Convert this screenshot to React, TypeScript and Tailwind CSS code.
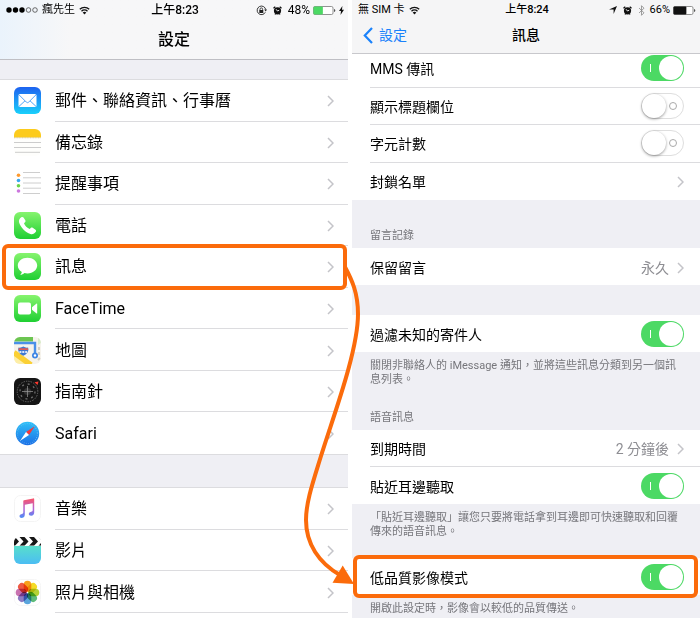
import { useState, useId, ReactNode } from "react";

interface AppItem {
  label: string;
  icon: ReactNode;
}

const GREEN = "#4cd964";

function MailIcon() {
  return (
    <svg viewBox="0 0 27 27" className="size-[27px] shrink-0">
      <defs>
        <linearGradient id="mail" x1="0" y1="0" x2="0" y2="1">
          <stop offset="0" stopColor="#1d62f0" />
          <stop offset="1" stopColor="#19d0fb" />
        </linearGradient>
      </defs>
      <rect width="27" height="27" rx="6" fill="url(#mail)" />
      <rect x="4.5" y="7" width="18" height="13" rx="1.5" fill="#fff" />
      <path d="M5 7.8l7.3 7.3a1.7 1.7 0 0 0 2.4 0l7.3-7.3M5 19.4l6-5.600M22 19.400l-6-5.600" fill="none" stroke="#3f9bf5" strokeWidth=".9" />
    </svg>
  );
}

function NotesIcon() {
  return (
    <svg viewBox="0 0 27 27" className="size-[27px] shrink-0">
      <path d="M0 8h27v13a6 6 0 0 1-6 6H6a6 6 0 0 1-6-6z" fill="#fefefc" />
      <path d="M0 8.5V6a6 6 0 0 1 6-6h15a6 6 0 0 1 6 6v2.5z" fill="#fccb1c" />
      <path d="M0 8.8h27" stroke="#c9b98a" strokeWidth=".7" strokeDasharray="1 .6" />
      <path d="M0 13.5h27M0 18.5h27M1 23.3h25" stroke="#c6c6c6" strokeWidth=".9" />
    </svg>
  );
}

function RemindersIcon() {
  return (
    <svg viewBox="0 0 27 27" className="size-[27px] shrink-0">
      <path d="M9 2.5h17M9 7.8h18M9 13h18M9 18.2h18M9 23.5h17" stroke="#c8c8c8" strokeWidth=".9" />
      <circle cx="4.5" cy="5.3" r="1.8" fill="#ff9a2e" />
      <circle cx="4.5" cy="10.5" r="1.8" fill="#38a8f0" />
      <circle cx="4.5" cy="15.8" r="1.8" fill="#6bd44a" />
      <circle cx="4.5" cy="21" r="1.8" fill="#cc78de" />
    </svg>
  );
}

function GreenTile({ id, children }: { id: string; children: ReactNode }) {
  return (
    <svg viewBox="0 0 27 27" className="size-[27px] shrink-0">
      <defs>
        <linearGradient id={id} x1="0" y1="0" x2="0" y2="1">
          <stop offset="0" stopColor="#86f46e" />
          <stop offset="1" stopColor="#1fcf32" />
        </linearGradient>
      </defs>
      <rect width="27" height="27" rx="6" fill={`url(#${id})`} />
      {children}
    </svg>
  );
}

function MapsIcon() {
  return (
    <svg viewBox="0 0 27 27" className="size-[27px] shrink-0">
      <defs>
        <clipPath id="maps"><rect width="27" height="27" rx="6" /></clipPath>
      </defs>
      <g clipPath="url(#maps)">
        <rect width="27" height="27" fill="#f6f3ec" />
        <path d="M0 0h19v4.500H0z" fill="#6cc551" />
        <path d="M24 0h3v6l-3 2z" fill="#d9ecca" />
        <path d="M0 14.500L17 27H0z" fill="#fdeea6" />
        <path d="M0 15.500L17 28" stroke="#fbd034" strokeWidth="5.500" />
        <path d="M25 10v3M25 15v3M24 23l2-2" stroke="#d2cdc0" strokeWidth="1.800" />
        <path d="M0 6h21v12" fill="none" stroke="#4a90e8" strokeWidth="2.400" />
        <circle cx="21" cy="18.500" r="3" fill="#3f86e4" />
        <circle cx="21" cy="18.500" r="1.200" fill="#fff" />
        <path d="M4.500 10.500q2.500.5 4.800-1 2.300 1.500 4.800 1 1.600 5.500-4.800 8.300-6.400-2.800-4.800-8.300z" fill="#3f78d0" />
        <path d="M4.600 12.200h9.500" stroke="#e25b55" strokeWidth="1.800" />
        <path d="M5.400 15h7.800" stroke="#dce8fa" strokeWidth="1.800" strokeDasharray="2 .9" />
      </g>
    </svg>
  );
}

function CompassIcon() {
  return (
    <svg viewBox="0 0 27 27" className="size-[27px] shrink-0">
      <rect width="27" height="27" rx="6" fill="#151515" />
      <circle cx="13.5" cy="13.5" r="10.3" fill="none" stroke="#8c8c8c" strokeWidth="1" strokeDasharray=".7 1.100" />
      <circle cx="13.5" cy="13.5" r="7.5" fill="none" stroke="#6d6d6d" strokeWidth="1.300" strokeDasharray="2 3.890" />
      <circle cx="13.5" cy="13.5" r="3.600" fill="#333" />
      <path d="M13.500 8v11M8 13.500h11" stroke="#999" strokeWidth=".7" />
      <path d="M20.500 4.200l4-.7-1 3.500z" fill="#ff3b30" />
    </svg>
  );
}

function SafariIcon() {
  return (
    <svg viewBox="0 0 27 27" className="size-[27px] shrink-0">
      <defs>
        <linearGradient id="safari" x1="0" y1="0" x2="0" y2="1">
          <stop offset="0" stopColor="#2fc0f7" />
          <stop offset="1" stopColor="#1b6fe6" />
        </linearGradient>
      </defs>
      <circle cx="13.500" cy="13.500" r="11.700" fill="url(#safari)" />
      <circle cx="13.500" cy="13.500" r="10" fill="none" stroke="#8fd0f8" strokeWidth="1.100" strokeDasharray=".4 1.700" />
      <path d="M20.800 6.200L12 12l3 3z" fill="#f2383b" />
      <path d="M6.200 20.800L12 12l3 3z" fill="#fff" />
    </svg>
  );
}

function MusicIcon() {
  return (
    <svg viewBox="0 0 27 27" className="size-[27px] shrink-0">
      <defs>
        <linearGradient id="music" x1="0" y1="0" x2="0" y2="1">
          <stop offset="0" stopColor="#fb5568" />
          <stop offset=".55" stopColor="#b263d8" />
          <stop offset="1" stopColor="#4a8df6" />
        </linearGradient>
      </defs>
      <rect x=".5" y=".5" width="26" height="26" rx="6" fill="#fff" stroke="#f4f4f4" />
      <path
        d="M9.300 6.300Q9.300 5.500 10 5.300L19.200 3.400Q20.200 3.200 20.200 4.200V17.500Q20.200 20.600 17.100 20.800 14.600 20.800 14.700 18.900 14.900 17.200 17.200 16.800 18.700 16.600 18.700 15.500V8.200L10.800 9.800V19.600Q10.800 22.700 7.800 22.900 5.300 22.900 5.400 20.900 5.600 19.300 7.800 18.900 9.300 18.700 9.300 17.500z"
        fill="url(#music)"
      />
    </svg>
  );
}

function VideosIcon() {
  return (
    <svg viewBox="0 0 27 27" className="size-[27px] shrink-0">
      <defs>
        <linearGradient id="videos" x1="0" y1="0" x2="0" y2="1">
          <stop offset="0" stopColor="#58dfcb" />
          <stop offset="1" stopColor="#4bbdf3" />
        </linearGradient>
        <clipPath id="slate"><path d="M0 8.700V5a5 5 0 0 1 5-5h17a5 5 0 0 1 5 5v3.700z" /></clipPath>
      </defs>
      <path d="M0 8.700h27V21a6 6 0 0 1-6 6H6a6 6 0 0 1-6-6z" fill="url(#videos)" />
      <g clipPath="url(#slate)">
        <rect width="27" height="9" fill="#fff" />
        <path
          d="M-4 0h5l4 4.400-4 4.400h-5l4-4.400zM5.500 0h5l4 4.400-4 4.400h-5l4-4.400zM15 0h5l4 4.400-4 4.400h-5l4-4.400zM24.500 0h5l4 4.400-4 4.400h-5l4-4.400z"
          fill="#171717"
        />
      </g>
    </svg>
  );
}

const PETALS = ["#f7a01c", "#f5dc27", "#b4d335", "#5dbb7a", "#5aa5dc", "#8d7cc4", "#c872b0", "#ee5a44"];

function PhotosIcon() {
  return (
    <svg viewBox="0 0 27 27" className="size-[27px] shrink-0">
      <rect x=".5" y=".5" width="26" height="26" rx="6" fill="#fff" stroke="#f6f6f6" />
      {PETALS.map((color, i) => (
        <rect
          key={color}
          x="9.700"
          y="1.700"
          width="7.600"
          height="11"
          rx="3.800"
          fill={color}
          transform={`rotate(${i * 45} 13.5 13.5)`}
          style={{ mixBlendMode: "multiply" }}
        />
      ))}
    </svg>
  );
}

const APPS: AppItem[] = [
  { label: "郵件、聯絡資訊、行事曆", icon: <MailIcon /> },
  { label: "備忘錄", icon: <NotesIcon /> },
  { label: "提醒事項", icon: <RemindersIcon /> },
  {
    label: "電話",
    icon: (
      <GreenTile id="phone">
        <path
          d="M7.300 5.300C8 4.700 9 4.800 9.500 5.500L11.300 8.300C11.700 9 11.600 9.800 11 10.300L10 11.200C10.700 13.300 13.400 16.200 15.700 17L16.700 16C17.200 15.500 18 15.400 18.700 15.800L21.500 17.700C22.200 18.200 22.300 19.100 21.800 19.800 20.400 21.800 18.600 22.700 16.400 22 11.500 20.500 6.500 15.300 5.100 10.500 4.500 8.300 5.500 6.700 7.300 5.300z"
          fill="#fff"
        />
      </GreenTile>
    ),
  },
  {
    label: "訊息",
    icon: (
      <GreenTile id="messages">
        <path
          d="M13.500 4.800C8 4.800 3.800 8.200 3.800 12.600c0 2.700 1.600 5 4 6.400-.1 1-.7 2-1.700 2.800 1.800 0 3.200-.6 4.300-1.800 1 .3 2 .4 3.100.4 5.500 0 9.700-3.400 9.700-7.800S19 4.800 13.500 4.800z"
          fill="#fff"
        />
      </GreenTile>
    ),
  },
  {
    label: "FaceTime",
    icon: (
      <GreenTile id="facetime">
        <rect x="4" y="7.500" width="13" height="12" rx="2" fill="#fff" />
        <path d="M18 12.200l4.600-3.600q.6-.4.600.4v9q0 .8-.6.400L18 14.800z" fill="#fff" />
      </GreenTile>
    ),
  },
  { label: "地圖", icon: <MapsIcon /> },
  { label: "指南針", icon: <CompassIcon /> },
  { label: "Safari", icon: <SafariIcon /> },
];

const MEDIA: AppItem[] = [
  { label: "音樂", icon: <MusicIcon /> },
  { label: "影片", icon: <VideosIcon /> },
  { label: "照片與相機", icon: <PhotosIcon /> },
];

function Chevron() {
  return (
    <svg viewBox="0 0 7 12" className="h-3 w-[7px] shrink-0">
      <path d="M1 1l5 5-5 5" fill="none" stroke="#c4c4c9" strokeWidth="1.5" />
    </svg>
  );
}

function Wifi() {
  return (
    <svg viewBox="0 0 11 9" className="h-[9px] w-[11px] shrink-0">
      <path d="M.8 3.300a6.700 6.700 0 0 1 9.400 0M2.500 5.200a4.300 4.300 0 0 1 6 0" fill="none" stroke="#111" strokeWidth="1.300" />
      <path d="M3.700 6.500a2.600 2.600 0 0 1 3.600 0L5.500 8.500z" fill="#111" />
    </svg>
  );
}

function Alarm() {
  return (
    <svg viewBox="0 0 9 9" className="size-[9px] shrink-0">
      <circle cx="4.500" cy="4.800" r="3.600" fill="#111" />
      <path d="M.5 2.300L2.300.7M8.500 2.300L6.700.7M2 8.500l.8-1M7 8.500l-.8-1" stroke="#111" strokeWidth="1.200" />
      <path d="M3 3.200l1.500 1.800 1.700-.8" fill="none" stroke="#fff" strokeWidth=".9" />
    </svg>
  );
}

function Battery({ level, color }: { level: number; color: string }) {
  return (
    <svg viewBox="0 0 23 9" className="h-[9px] w-[23px] shrink-0">
      <rect x=".5" y=".5" width="19.500" height="8" rx="1.500" fill="#fff" stroke="#777" strokeWidth=".8" />
      <rect x=".5" y=".5" width={19.5 * level} height="8" rx="1" fill={color} />
      <path d="M21 3q1.300.3 1.300 1.500T21 6z" fill="#555" />
    </svg>
  );
}

function AppRow({ item, last, highlighted }: { item: AppItem; last?: boolean; highlighted?: boolean }) {
  return (
    <li className="relative flex">
      <a href="#" className="flex flex-1 items-center gap-3.5 pl-3.5">
        {item.icon}
        <span className={`flex flex-1 items-center justify-between self-stretch pt-0.5 pr-3.5 ${last ? "" : "border-b border-[#dcdcdf]"}`}>
          {item.label}
          <Chevron />
        </span>
      </a>
      {highlighted && (
        <span className="pointer-events-none absolute -inset-y-0.5 right-px left-0.5 rounded-md border-4 border-[#fb6b0b]" />
      )}
    </li>
  );
}

function Toggle({ id, defaultOn }: { id: string; defaultOn: boolean }) {
  const [on, setOn] = useState(defaultOn);
  return (
    <input
      id={id}
      type="checkbox"
      role="switch"
      checked={on}
      onChange={() => setOn(v => !v)}
      className={`relative h-[26px] w-[43px] shrink-0 appearance-none rounded-full before:absolute before:rounded-full before:bg-white after:absolute ${
        on
          ? "bg-[#4cd964] before:top-px before:right-px before:size-6 after:top-[9px] after:left-[9px] after:h-2 after:w-px after:bg-white"
          : "border border-[#dedede] bg-white before:top-0 before:left-0 before:size-6 before:shadow-[0_1px_3px_rgba(0,0,0,0.4)] after:top-2 after:right-1.5 after:size-2 after:rounded-full after:border after:border-[#a9a9a9]"
      }`}
    />
  );
}

interface SettingRowProps {
  label: string;
  toggle?: boolean;
  value?: string;
  last?: boolean;
  highlighted?: boolean;
}

function SettingRow({ label, toggle, value, last, highlighted }: SettingRowProps) {
  const id = useId();
  const line = last ? "" : "border-b border-[#dcdcdf]";
  return (
    <li className="relative flex min-h-[37px] pl-[18px]">
      {toggle !== undefined ? (
        <div className={`flex flex-1 items-center justify-between pr-4 ${line}`}>
          <label htmlFor={id} className="pt-0.5">{label}</label>
          <Toggle id={id} defaultOn={toggle} />
        </div>
      ) : (
        <a href="#" className={`flex flex-1 items-center justify-between pt-0.5 pr-4 ${line}`}>
          {label}
          <span className="flex items-center gap-2 text-[#8e8e93]">
            {value}
            <Chevron />
          </span>
        </a>
      )}
      {highlighted && (
        <span className="pointer-events-none absolute -inset-y-[3px] right-0.5 left-px rounded-md border-4 border-[#fb6b0b]" />
      )}
    </li>
  );
}

function GroupTitle({ children }: { children: ReactNode }) {
  return <h2 className="pt-6 pr-3.5 pb-[5px] pl-[18px] text-[11px] leading-[14px] text-[#76767b]">{children}</h2>;
}

function GroupNote({ children }: { children: ReactNode }) {
  return <p className="pt-[7px] pr-3.5 pl-[18px] text-[11px] leading-[14px] text-[#76767b]">{children}</p>;
}

function SettingsScreen() {
  return (
    <section className="flex min-w-0 flex-1 flex-col bg-white text-base leading-5">
      <header className="h-[60px] border-b border-[#bfbfc4] bg-[#f7f7f8] bg-linear-to-r from-[#eaf3fc] to-[#f7f7f8] to-20%">
        <div className="grid grid-cols-[1fr_auto_1fr] items-center pt-0.5 pr-1 pl-1.5 text-[12px] leading-4">
          <div className="flex items-center gap-1 text-[11px]">
            <svg viewBox="0 0 32 6" className="h-1.5 w-8">
              <circle cx="3" cy="3" r="2.700" />
              <circle cx="9.500" cy="3" r="2.700" />
              <circle cx="16" cy="3" r="2.700" />
              <circle cx="22.500" cy="3" r="2.300" fill="none" stroke="#333" strokeWidth=".7" />
              <circle cx="29" cy="3" r="2.300" fill="none" stroke="#333" strokeWidth=".7" />
            </svg>
            瘋先生
            <Wifi />
          </div>
          <span className="font-medium">上午8:23</span>
          <div className="flex items-center justify-end gap-[3px]">
            <svg viewBox="0 0 11 11" className="size-[11px]">
              <path d="M9.300 7.300A4.300 4.300 0 1 1 9.700 4.600" fill="none" stroke="#222" strokeWidth=".9" />
              <path d="M8.200 4.500h2.800L9.700 6.400z" fill="#222" />
              <rect x="3.300" y="5" width="4" height="3" fill="#222" />
              <path d="M4 5V4.200a1.300 1.300 0 0 1 2.600 0V5" fill="none" stroke="#222" strokeWidth=".8" />
            </svg>
            <span className="px-[3px]"><Alarm /></span>
            48%
            <Battery level={0.48} color={GREEN} />
            <svg viewBox="0 0 5 9" className="h-[9px] w-[5px]">
              <path d="M3.400 0L0 5h2L1.500 9 5 3.800H3z" fill="#111" />
            </svg>
          </div>
        </div>
        <h1 className="pt-3 text-center text-base leading-5 font-medium">設定</h1>
      </header>
      <div className="h-[19px] bg-[#efeff4]" />
      <ul className="grid min-h-[376px] auto-rows-fr border-y border-[#dcdcdf]">
        {APPS.map((item, i) => (
          <AppRow key={item.label} item={item} last={i === APPS.length - 1} highlighted={item.label === "訊息"} />
        ))}
      </ul>
      <div className="h-8 bg-[#efeff4]" />
      <ul className="grid min-h-[126px] auto-rows-fr border-t border-[#dcdcdf]">
        {MEDIA.map(item => <AppRow key={item.label} item={item} />)}
      </ul>
    </section>
  );
}

function MessagesScreen() {
  return (
    <section className="flex min-w-0 flex-1 flex-col bg-[#efeff4] text-sm leading-5">
      <header className="relative z-10 h-[54px] border-b border-[#c8c8cc] bg-[#f5f5f6]">
        <div className="grid grid-cols-[1fr_auto_1fr] items-center pt-0.5 pr-1 pl-1.5 text-[11px] leading-4">
          <div className="flex items-center gap-1">
            無 SIM 卡
            <Wifi />
          </div>
          <span className="font-medium">上午8:24</span>
          <div className="flex items-center justify-end gap-[3px]">
            <svg viewBox="0 0 8 8" className="size-2">
              <path d="M8 0L4.600 8V3.500H0z" fill="#111" />
            </svg>
            <span className="px-[3px]"><Alarm /></span>
            <svg viewBox="0 0 7 11" className="h-[11px] w-[7px]">
              <path d="M1 3l5 4.800-2.500 2.500V.7L6 3.200 1 8" fill="none" stroke="#888" strokeWidth=".8" />
            </svg>
            <span className="pl-0.5">66%</span>
            <Battery level={0.66} color="#111" />
          </div>
        </div>
        <div className="grid grid-cols-[1fr_auto_1fr] items-center pt-[7px]">
          <a href="#" className="flex items-center gap-1.5 pl-[11px] text-[#1a82fb]">
            <svg viewBox="0 0 10 17" className="h-[17px] w-2.5">
              <path d="M9 1L1.800 8.500 9 16" fill="none" stroke="currentColor" strokeWidth="2.200" />
            </svg>
            設定
          </a>
          <h1 className="font-medium">訊息</h1>
        </div>
      </header>
      {/* list is scrolled a little way under the nav bar */}
      <ul className="-mt-1 mb-[5px] grid min-h-[150px] auto-rows-fr bg-white">
        <SettingRow label="MMS 傳訊" toggle={true} />
        <SettingRow label="顯示標題欄位" toggle={false} />
        <SettingRow label="字元計數" toggle={false} />
        <SettingRow label="封鎖名單" last />
      </ul>
      <GroupTitle>留言記錄</GroupTitle>
      <ul className="bg-white">
        <SettingRow label="保留留言" value="永久" last />
      </ul>
      <ul className="mt-[30px] bg-white">
        <SettingRow label="過濾未知的寄件人" toggle={true} last />
      </ul>
      <GroupNote>關閉非聯絡人的 iMessage 通知，並將這些訊息分類到另一個訊息列表。</GroupNote>
      <GroupTitle>語音訊息</GroupTitle>
      <ul className="bg-white">
        <SettingRow label="到期時間" value="2 分鐘後" />
        <SettingRow label="貼近耳邊聽取" toggle={true} last />
      </ul>
      <GroupNote>「貼近耳邊聽取」讓您只要將電話拿到耳邊即可快速聽取和回覆傳來的語音訊息。</GroupNote>
      <ul className="mt-[19px] bg-white">
        <SettingRow label="低品質影像模式" toggle={true} last highlighted />
      </ul>
      <GroupNote>開啟此設定時，影像會以較低的品質傳送。</GroupNote>
    </section>
  );
}

export default function App() {
  return (
    <main className="relative flex min-h-screen gap-1 overflow-hidden bg-white font-['Roboto','Noto_Sans_CJK_TC',sans-serif] text-black">
      <SettingsScreen />
      <MessagesScreen />
      {/* arrow from the 訊息 row to the low quality mode switch */}
      <svg viewBox="300 260 70 330" className="pointer-events-none absolute top-[260px] left-1/2 z-20 -ml-[50px] h-[330px] w-[70px]">
        <path
          d="M345 267C352 280 358 293 358 314C358 352 332 420 321 456C313 482 306 502 306 520C306 544 319 563 340 575"
          fill="none"
          stroke="#fb6b0b"
          strokeWidth="4"
        />
        <path d="M354 584L342.700 565.500 332.500 582.700z" fill="#fb6b0b" />
      </svg>
    </main>
  );
}
